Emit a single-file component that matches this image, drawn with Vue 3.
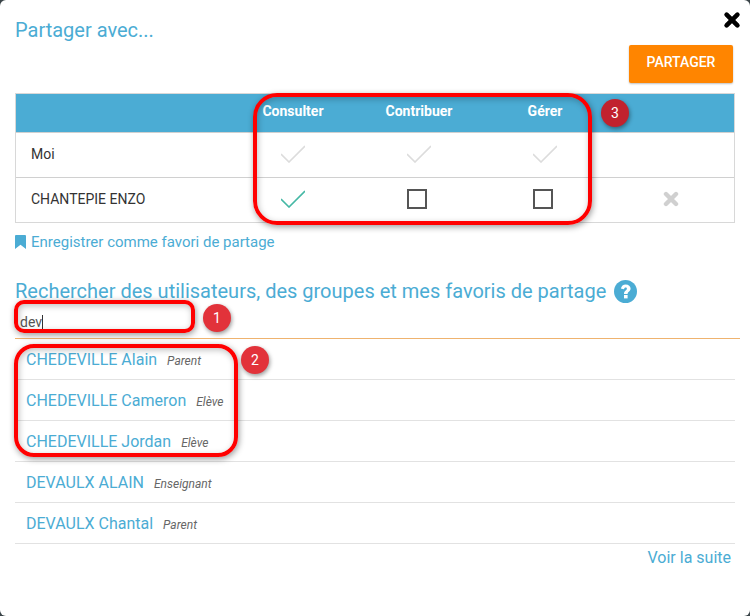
<template>
  <div class="modal">
    <button class="close" aria-label="Fermer">
      <svg width="18" height="18" viewBox="0 0 18 18"><path d="M3.6 3.6 L14.4 14.4 M14.4 3.6 L3.6 14.4" stroke="#000" stroke-width="4.6" stroke-linecap="round" /></svg>
    </button>

    <h2 class="title">Partager avec...</h2>
    <div class="actions">
      <button class="share">PARTAGER</button>
    </div>

    <div class="table">
      <div class="row head">
        <div class="cell name"></div>
        <div class="cell" v-for="col in columns" :key="col">{{ col }}</div>
        <div class="cell"></div>
      </div>
      <div class="row" v-for="row in rows" :key="row.name">
        <div class="cell name">{{ row.name }}</div>
        <div class="cell" v-for="(state, i) in row.rights" :key="i">
          <svg v-if="state !== 'box'" width="24" height="18" viewBox="0 0 24 18">
            <path d="M0 9 L8 17 L24 1" fill="none" :stroke="state === 'on' ? '#45b8a5' : '#dcdcdc'" stroke-width="1.6" />
          </svg>
          <span v-else class="box"></span>
        </div>
        <div class="cell">
          <svg v-if="row.removable" width="16" height="16" viewBox="0 0 16 16"><path d="M3 3 L13 13 M13 3 L3 13" stroke="#d0d0d0" stroke-width="4.4" stroke-linecap="round" /></svg>
        </div>
      </div>
    </div>

    <a class="favorite">
      <svg width="11" height="14" viewBox="0 0 11 14"><path d="M1 0 H10 Q11 0 11 1 V14 L5.5 9.8 L0 14 V1 Q0 0 1 0 Z" fill="#4bacd4" /></svg>
      Enregistrer comme favori de partage
    </a>

    <h2 class="search-title">
      Rechercher des utilisateurs, des groupes et mes favoris de partage
      <svg width="23" height="23" viewBox="0 0 23 23">
        <circle cx="11.5" cy="11.5" r="11.5" fill="#4bacd4" />
        <path d="M6.9 8.6 C7.3 5.9 9.2 4.4 11.7 4.4 C14.5 4.4 16.6 6.1 16.6 8.6 C16.6 11.6 13.6 11.7 13.6 14 H10 C10 10.6 12.9 10.4 12.9 8.8 C12.9 8.1 12.4 7.6 11.6 7.6 C10.8 7.6 10.3 8.1 10 9.3 Z" fill="#fff" />
        <rect x="10" y="15" width="3.6" height="3.4" fill="#fff" />
      </svg>
    </h2>

    <div class="search">dev<span class="caret"></span></div>

    <ul class="results">
      <li v-for="r in results" :key="r.name">
        <span class="person">{{ r.name }}</span>
        <em class="role">{{ r.role }}</em>
      </li>
    </ul>
    <a class="more">Voir la suite</a>

    <!-- annotations par-dessus la capture -->
    <div class="mark mark-1"></div>
    <div class="mark mark-2"></div>
    <div class="mark mark-3"></div>
    <span class="pin pin-1">1</span>
    <span class="pin pin-2">2</span>
    <span class="pin pin-3">3</span>
  </div>
</template>

<script setup>
const columns = ["Consulter", "Contribuer", "Gérer"];

const rows = [
  { name: "Moi", rights: ["off", "off", "off"], removable: false },
  { name: "CHANTEPIE ENZO", rights: ["on", "box", "box"], removable: true },
];

const results = [
  { name: "CHEDEVILLE Alain", role: "Parent" },
  { name: "CHEDEVILLE Cameron", role: "Elève" },
  { name: "CHEDEVILLE Jordan", role: "Elève" },
  { name: "DEVAULX ALAIN", role: "Enseignant" },
  { name: "DEVAULX Chantal", role: "Parent" },
];
</script>

<style>
body {
  background: #3a4448;
}
</style>

<style scoped>
.modal {
  position: relative;
  box-sizing: border-box;
  width: 750px;
  height: 616px;
  padding: 18px 15px 0;
  background: #fff;
  border-radius: 6px;
  font-family: Roboto, sans-serif;
  overflow: hidden;
}

.close {
  position: absolute;
  top: 11px;
  right: 9px;
  padding: 0;
  border: 0;
  background: none;
  line-height: 0;
}

.title {
  margin: 0;
  font-size: 20px;
  font-weight: 400;
  line-height: 24px;
  color: #4bacd4;
}

.actions {
  display: flex;
  justify-content: flex-end;
  margin: 3px 2px 10px 0;
}

.share {
  width: 104px;
  height: 38px;
  padding: 0 0 4px;
  border: 0;
  border-radius: 2px;
  background: #ff8500;
  color: #fff;
  font-family: inherit;
  font-size: 14px;
  font-weight: 500;
  box-shadow: 0 1px 2px rgba(0, 0, 0, 0.25);
}

.table {
  width: 720px;
  border: 1px solid #d8d8d8;
  box-sizing: border-box;
}

.row {
  display: grid;
  grid-template-columns: 214px repeat(4, 126px);
  height: 44px;
  border-top: 1px solid #d0d0d0;
  color: #333;
  font-size: 14px;
}

.row.head {
  height: 38px;
  border-top: 0;
  background: #4bacd4;
  color: #fff;
  font-weight: 700;
}

.row.head .cell {
  padding-bottom: 4px;
}

.cell {
  display: flex;
  align-items: center;
  justify-content: center;
  padding-bottom: 2px;
}

.cell.name {
  justify-content: flex-start;
  padding-left: 15px;
}

.box {
  width: 16px;
  height: 16px;
  margin-right: 4px;
  border: 2px solid #555;
}

.favorite {
  display: flex;
  align-items: center;
  gap: 5px;
  margin-top: 10px;
  font-size: 15px;
  line-height: 18px;
  color: #4bacd4;
}

.search-title {
  display: flex;
  align-items: center;
  gap: 8px;
  margin: 28px 0 0;
  font-size: 20px;
  font-weight: 400;
  line-height: 24px;
  color: #4bacd4;
}

.search {
  width: 725px;
  height: 34px;
  margin-top: 2px;
  padding: 7px 0 0 5px;
  box-sizing: border-box;
  border-bottom: 1px solid #efb36f;
  font-size: 14px;
  line-height: 20px;
  color: #555;
}

.caret {
  display: inline-block;
  width: 1px;
  height: 15px;
  background: #333;
  vertical-align: -3px;
}

.results {
  width: 720px;
  margin: 0;
  padding: 0;
  list-style: none;
}

.results li {
  display: flex;
  align-items: baseline;
  gap: 10px;
  height: 41px;
  padding: 11px 0 0 11px;
  box-sizing: border-box;
  border-bottom: 1px solid #e2e2e2;
}

.person {
  font-size: 16px;
  color: #4bacd4;
}

.role {
  font-size: 12px;
  color: #666;
}

.more {
  display: block;
  width: 716px;
  margin-top: 4px;
  font-size: 16px;
  line-height: 20px;
  text-align: right;
  color: #4bacd4;
}

.mark {
  position: absolute;
  box-sizing: border-box;
  border: 4px solid #f00;
  box-shadow: 1px 2px 6px rgba(0, 0, 0, 0.4), inset 1px 2px 6px rgba(0, 0, 0, 0.25);
}

.mark-1 {
  left: 14px;
  top: 300px;
  width: 181px;
  height: 33px;
  border-radius: 10px;
}

.mark-2 {
  left: 14px;
  top: 344px;
  width: 224px;
  height: 113px;
  border-radius: 20px;
}

.mark-3 {
  left: 253px;
  top: 93px;
  width: 339px;
  height: 132px;
  border-radius: 24px;
}

.pin {
  position: absolute;
  width: 28px;
  height: 28px;
  border-radius: 50%;
  background: #e2323a;
  color: #fff;
  font-size: 14px;
  line-height: 28px;
  text-align: center;
  box-shadow: 1px 2px 4px rgba(0, 0, 0, 0.4);
}

.pin-1 {
  left: 203px;
  top: 304px;
}

.pin-2 {
  left: 241px;
  top: 346px;
}

.pin-3 {
  left: 601px;
  top: 99px;
  background: #c1222e;
}
</style>
